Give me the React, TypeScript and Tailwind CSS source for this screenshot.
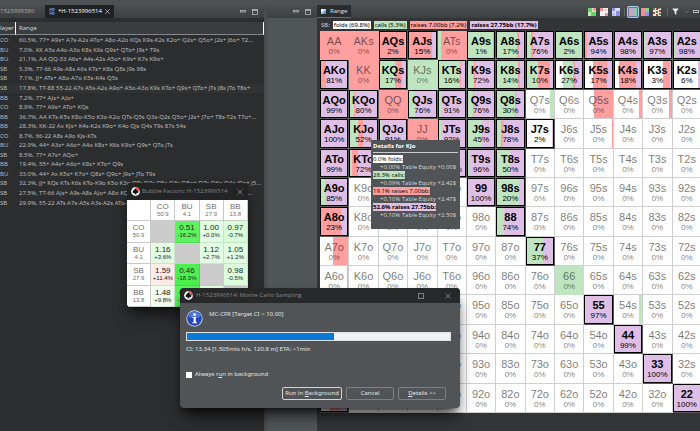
import React from "react";

const COLORS = {
  fold: "#ffffff",
  call: "#bfe5c0",
  raise: "#ff9fa0",
  shove: "#e0bfe6",
};

const RANKS = ["A", "K", "Q", "J", "T", "9", "8", "7", "6", "5", "4", "3", "2"];

// [fold, call, small raise, big raise] in percent, folded hands are left out
const MIX: Record<string, number[]> = {
  AA: [0, 0, 100, 0],
  AKs: [0, 0, 100, 0],
  AQs: [0, 0, 98, 2],
  AJs: [0, 0, 85, 15],
  ATs: [0, 12, 88, 0],
  A9s: [0, 96, 3, 1],
  A8s: [0, 75, 8, 17],
  A7s: [0, 14, 10, 76],
  A6s: [0, 98, 0, 2],
  A5s: [0, 0, 6, 94],
  A4s: [0, 2, 0, 98],
  A3s: [0, 3, 0, 97],
  A2s: [0, 2, 0, 98],
  AKo: [0, 0, 19, 81],
  KK: [0, 0, 100, 0],
  KQs: [0, 57, 26, 17],
  KJs: [0, 100, 0, 0],
  KTs: [0, 80, 4, 16],
  K9s: [0, 25, 3, 72],
  K8s: [0, 78, 8, 14],
  K7s: [0, 42, 48, 10],
  K6s: [27, 38, 8, 27],
  K5s: [30, 0, 53, 17],
  K4s: [17, 0, 65, 18],
  K3s: [70, 0, 27, 3],
  K2s: [94, 0, 0, 6],
  AQo: [0, 1, 0, 99],
  KQo: [0, 14, 6, 80],
  QQ: [0, 0, 100, 0],
  QJs: [0, 24, 0, 76],
  QTs: [0, 9, 0, 91],
  Q9s: [0, 20, 4, 76],
  Q8s: [0, 67, 3, 30],
  Q7s: [84, 16, 0, 0],
  Q5s: [33, 0, 67, 0],
  Q4s: [88, 0, 12, 0],
  Q3s: [90, 0, 10, 0],
  AJo: [0, 0, 0, 100],
  KJo: [0, 28, 19, 52],
  QJo: [0, 9, 0, 91],
  JJ: [0, 0, 100, 0],
  JTs: [0, 8, 0, 92],
  J9s: [0, 55, 0, 45],
  J8s: [0, 16, 6, 78],
  J7s: [98, 0, 0, 2],
  J5s: [97, 0, 3, 0],
  ATo: [0, 1, 0, 99],
  KTo: [0, 8, 20, 72],
  TT: [0, 0, 0, 100],
  T9s: [0, 4, 0, 96],
  T8s: [0, 50, 0, 50],
  A9o: [0, 15, 0, 85],
  "99": [0, 0, 0, 100],
  "98s": [0, 80, 0, 20],
  A8o: [0, 0, 77, 23],
  "88": [0, 26, 0, 74],
  A7o: [45, 0, 55, 0],
  "77": [0, 63, 0, 37],
  A6o: [96, 0, 4, 0],
  "66": [0, 100, 0, 0],
  "55": [0, 3, 0, 97],
  "54s": [90, 10, 0, 0],
  "44": [0, 1, 0, 99],
  "33": [0, 0, 0, 100],
  "22": [0, 0, 0, 100],
  A2o: [33, 0, 37, 30],
};

const HISTORY = [
  ["CO", "60.5%, 77+ A9s+ A7s-A2s ATo+ A8o-A2o KQs K9s-K2s K2o+ Q2s+ Q5o+ J2s+ J6o+ T2..."],
  ["BU", "7.0%, KK A5s A4o-A3o K8s K6s Q9s+ QTo+ J9s+ T9s"],
  ["BU", "21.1%, AA QQ-33 A6s+ A4s-A2s A5o+ K9s+ K7s K9o+"],
  ["SB", "5.3%, 77-66 A9s-A8s A6s KTs+ K8s Q8s J9s 98s"],
  ["SB", "7.1%, JJ+ ATs+ A8o-A7o K5s-K4s Q5s"],
  ["SB", "17.8%, TT-88 55-22 A7s A5s-A2s A9o+ A5o-A3o K9s KTo+ Q9s+ QTo+ JTs J8s JTo T8s+"],
  ["BB", "7.2%, 77+ AJs+ AJo+"],
  ["CO", "8.9%, 77+ A9s+ ATo+ KQs"],
  ["BB", "36.7%, AA KTs-K5s K8o-K5o K3o-K2o QTs-Q5s Q3s-Q2s Q5o+ J2s+ J7o+ T8s-T2s T7o+..."],
  ["BB", "28.3%, KK-22 Ax KJs+ K4s-K2s K9o+ K4o QJs Q4s T9s 87s 54s"],
  ["CO", "8.7%, 66-22 A8s A9o KJs-KTs"],
  ["BU", "22.9%, 44+ A3s+ A6o+ A4o K8s+ K6s K9o+ Q9s+ QTo JTs"],
  ["SB", "8.5%, 77+ A7s+ AQo+"],
  ["BB", "19.4%, 55+ A4s+ A6o+ K8s+ KTo+ Q9s"],
  ["BU", "33.0%, 44+ Ax K5s+ K7o+ Q8s+ Q9o+ J9s+ JTo T9s"],
  ["SB", "32.3%, JJ+ KQs KTs K6s KTo-K9o K5o K3o QTs Q7s Q5s Q3s Q8o+ Q7s Q6o Q4o J9o+ J5..."],
  ["SB", "27.5%, TT-66 AJs+ A9s-A8s AJo+ A8o KQs K9s-K7s KTo+ Q9s Q7s QTo+ J8s+ T8s T2o..."],
  ["SB", "29.9%, 55-22 ATs A7s-A5s A3s-A2s ATo-A7o KJs K9s-K6s K9o+ QJs Q9s-Q8s J9s+ Q..."],
];

const SEATS = [
  ["CO", "50.9"],
  ["BU", "4.1"],
  ["SB", "27.9"],
  ["BB", "13.8"],
];

const FACTORS: (string[] | null)[][] = [
  [null, ["0.51", "-16.2%", "bg-[#5df35f]"], ["1.00", "+0.0%", "bg-[#e2ffe2]"], ["0.97", "-0.7%", "bg-[#d8ffd8]"]],
  [["1.16", "+3.6%", "bg-[#e2ffe2]"], null, ["1.12", "+2.7%", "bg-[#e2ffe2]"], ["1.05", "+1.2%", "bg-[#e2ffe2]"]],
  [["1.59", "+11.4%", "bg-[#ffeaea]"], ["0.46", "-18.3%", "bg-[#4cf04e]"], null, ["0.98", "-0.5%", "bg-[#dcffdc]"]],
  [["1.48", "+9.8%", "bg-[#f1fff1]"], ["0.49", "-17.1%", "bg-[#5df35f]"], ["1.02", "+0.5%", "bg-[#e2ffe2]"], null],
];

const fill = (mix: number[]) => {
  const keys = ["fold", "call", "raise", "shove"] as const;
  let at = 0;
  const stops = keys
    .map((key, i) => {
      const from = at;
      at += mix[i];
      return mix[i] > 0 ? `${COLORS[key]} ${from}% ${at}%` : "";
    })
    .filter(Boolean);
  return `linear-gradient(to right, ${stops.join(", ")})`;
};

const handName = (row: number, col: number) => {
  if (row === col) return RANKS[row] + RANKS[row];
  return row < col ? `${RANKS[row]}${RANKS[col]}s` : `${RANKS[col]}${RANKS[row]}o`;
};

const HandCell = ({ name }: { name: string }) => {
  const mix = MIX[name] || [100, 0, 0, 0];
  const active = mix[3] > 0;
  const edge = active ? "bg-[#5a5a5a]" : mix[0] > 0 ? "bg-[#cfcfcf]" : "";
  return (
    <td
      className={`h-[29px] p-0 pr-px pb-px ${edge}`}
      style={edge ? undefined : { background: fill(mix) }}
    >
      <div
        className={`flex h-full flex-col items-center whitespace-nowrap ${
          active ? "border border-black pt-[3px] text-black" : "pt-1 text-black/55"
        }`}
        style={{ background: fill(mix) }}
      >
        <span className={`text-[11px] leading-3 ${active ? "font-bold" : ""}`}>{name}</span>
        <span className="text-[8px] leading-[10px]">{mix[3]}%</span>
      </div>
    </td>
  );
};

const PaneButtons = () => (
  <div className="ml-auto flex items-center gap-1.5 pr-1.5 text-[#b4b8ba]">
    <button aria-label="Minimize">
      <svg className="h-1.5 w-1.5" viewBox="0 0 6 6" fill="none" stroke="currentColor">
        <rect x="0.5" y="1.5" width="5" height="1.5" strokeWidth="0.8" />
      </svg>
    </button>
    <button aria-label="Maximize">
      <svg className="h-1.5 w-1.5" viewBox="0 0 6 6" fill="none" stroke="currentColor">
        <rect x="0.5" y="0.5" width="5" height="5" strokeWidth="0.8" />
        <path d="M0.5 1.3h5" />
      </svg>
    </button>
  </div>
);

const tabBar = "flex h-[13px] items-center bg-linear-to-b from-[#4b4f51] to-[#3c3f41] font-['Open_Sans',sans-serif]";

const HistoryPane = () => (
  <section className="flex min-w-0 flex-col overflow-hidden bg-[#2c2d2e]">
    <div className={tabBar}>
      <button className="w-[45px] text-left text-[#aeb1b3]">1523995380</button>
      <button className="flex h-full items-center gap-[3px] bg-[#1f2123] px-1 text-white">
        <svg className="h-[7px] w-[6px]" viewBox="0 0 6 7" fill="none" stroke="#6f93d6">
          <path d="M1 0v6.5M1 1.5h2M1 5.5h2" strokeWidth="0.8" />
          <rect x="3" y="0.5" width="2" height="2" strokeWidth="0.8" />
          <rect x="3" y="4.2" width="2" height="2" strokeWidth="0.8" />
        </svg>
        *H-1523996514
        <svg className="h-[5px] w-[5px]" viewBox="0 0 5 5" stroke="#c9cccd" strokeWidth="0.8">
          <path d="M0.3 0.3l4.4 4.4M4.7 0.3L0.3 4.7" />
        </svg>
      </button>
      <PaneButtons />
    </div>
    <table className="mt-1 w-full table-fixed border-separate border-spacing-0 text-left">
      <thead>
        <tr className="h-[13px] bg-[#3a3d3f] text-[#d0d2d3]">
          <th className="w-4 border-r border-b border-r-white border-b-[#85888a] p-0 font-normal">layer</th>
          <th className="border-r border-b border-r-white border-b-[#85888a] p-0 pl-[3px] font-normal">Range</th>
        </tr>
      </thead>
    </table>
    <table className="mt-px h-[172px] w-full table-fixed border-separate border-spacing-0 text-[#b8bbbd]">
      <tbody>
        {HISTORY.map(([player, range], i) => (
          <tr key={i} className={i === 5 ? "bg-[#313233]" : ""}>
            <td className="w-4 p-0">{player}</td>
            <td className="overflow-hidden p-0 pl-[3px] whitespace-nowrap">{range}</td>
          </tr>
        ))}
      </tbody>
    </table>
  </section>
);

const ToolIcon = ({ label, active, children }: { label: string; active?: boolean; children: React.ReactNode }) => (
  <button
    aria-label={label}
    className={`flex h-3 w-3 items-center justify-center rounded-xs ${
      active ? "border border-[#a9d0f2] bg-[#5b7c9b]" : ""
    }`}
  >
    <svg className="h-2 w-2" viewBox="0 0 8 8">
      {children}
    </svg>
  </button>
);

const RangeToolbar = () => (
  <div className="ml-auto flex items-center">
    <ToolIcon label="Show calls">
      <rect width="8" height="8" fill="#f3dccb" />
      <path d="M0 0h4v4H0zM3 4h5v4H3z" fill="#62d66a" />
      <path d="M0 4h3v4H0z" fill="#bdeeb5" />
      <path d="M5 0h3v3H5z" fill="#f0a39b" />
    </ToolIcon>
    <ToolIcon label="Show raises">
      <rect width="8" height="8" fill="#fdf1ef" />
      <path d="M0 0h3v3H0zM5 5h3v3H5z" fill="#f0938f" />
      <path d="M4 1h3v2H4z" fill="#f7c9c6" />
    </ToolIcon>
    <ToolIcon label="Show equity">
      <rect width="8" height="8" fill="#d9dcfa" />
      <path d="M0 0h3v3H0zM4 3h4v5H4z" fill="#8b92e8" />
      <path d="M0 5h3v3H0z" fill="#b9bdf4" />
    </ToolIcon>
    <span className="mx-0.5 h-2 w-px bg-[#5f6365]" />
    <ToolIcon label="Strategy bars" active>
      <rect width="3" height="8" fill="#ec9a9c" />
      <rect x="3" width="2" height="8" fill="#b7a9dc" />
      <rect x="5" width="3" height="8" fill="#8fc7a8" />
    </ToolIcon>
    <ToolIcon label="Strategy blocks">
      <rect width="8" height="8" fill="#f08f93" />
      <path d="M4 0h4v4H4z" fill="#7fd68b" />
      <path d="M4 4h4v4H4z" fill="#8f96e6" />
    </ToolIcon>
    <ToolIcon label="Suits">
      <rect width="8" height="8" fill="#e9e2dc" />
      <path d="M0 0h2v2H0zM3 3h2v2H3zM6 5h2v2H6zM5 0h2v1H5z" fill="#4a8f50" />
      <path d="M3 0h2v2H3zM0 4h2v2H0zM6 2h2v2H6zM3 6h2v2H3z" fill="#a9484a" />
    </ToolIcon>
    <span className="mx-1 h-2 w-px bg-[#5f6365]" />
    <button aria-label="Filter">
      <svg className="h-[7px] w-[7px]" viewBox="0 0 7 7" fill="#eceeef">
        <path d="M0.2 0.5h6.6L4.3 3.7V7L2.7 5.8V3.7z" />
      </svg>
    </button>
    <button aria-label="View menu" className="ml-1.5">
      <svg className="h-1 w-1" viewBox="0 0 4 4" fill="none" stroke="#7b7f81" strokeWidth="0.8">
        <path d="M0.5 1.2L2 2.7 3.5 1.2" />
      </svg>
    </button>
    <button aria-label="Minimize" className="mr-px ml-1 h-[3px] w-1.5 border border-[#b4b8ba]" />
  </div>
);

const RangePane = () => (
  <section className="flex min-w-0 flex-col overflow-hidden bg-[#323435]">
    <div className={tabBar}>
      <button className="flex h-full items-center gap-1 border-b border-[#3b78b0] bg-[#2a2d30] px-1 text-[#dfe1e2]">
        <svg className="h-[5px] w-[5px]" viewBox="0 0 5 5">
          <rect width="5" height="5" fill="#a9c7e0" />
          <rect width="2.5" height="2.5" fill="#ffffff" />
          <rect x="2.5" y="2.5" width="2.5" height="2.5" fill="#5d93c4" />
        </svg>
        Range
      </button>
      <RangeToolbar />
    </div>
    <div className="mt-[3px] ml-1 flex h-2 items-center gap-[3px] leading-2 whitespace-nowrap text-black">
      <span className="text-[#d0d2d3]">SB:</span>
      <span className="bg-white px-px">folds (69.8%)</span>
      <span className="bg-[#bfe5c0] px-px">calls (5.3%)</span>
      <span className="bg-[#ff9fa0] px-px">raises 7.00bb (7.2%)</span>
      <span className="bg-[#e0bfe6] px-px font-bold">raises 27.75bb (17.7%)</span>
    </div>
    <div className="mt-0.5 ml-[3px]">
      <table className="h-[382px] w-[calc(100%+2px)] table-fixed border-separate border-spacing-0 font-['Liberation_Sans',sans-serif]">
        <tbody>
          {RANKS.map((rank, row) => (
            <tr key={rank}>
              {RANKS.map((_, col) => (
                <HandCell key={col} name={handName(row, col)} />
              ))}
            </tr>
          ))}
        </tbody>
      </table>
    </div>
  </section>
);

const AppIcon = () => (
  <svg className="h-[9px] w-[9px] shrink-0" viewBox="0 0 9 9">
    <circle cx="4.5" cy="4.5" r="4.4" fill="#f4f4f4" />
    <path d="M4.5 0.1A4.4 4.4 0 0 1 8.9 4.5H7.2A2.7 2.7 0 0 0 4.5 1.8z" fill="#e5484d" />
    <path d="M4.5 1.2c.7 1.1 2.8 2.1 2.8 3.7 0 1.2-1.5 1.5-2.2.9l.6 1.4H3.3l.6-1.4c-.7.6-2.2.3-2.2-.9 0-1.6 2.1-2.6 2.8-3.7z" fill="#111" />
  </svg>
);

const CloseIcon = () => (
  <svg className="h-1.5 w-1.5" viewBox="0 0 6 6" stroke="#8d8f90" strokeWidth="0.8">
    <path d="M0.5 0.5l5 5M5.5 0.5l-5 5" />
  </svg>
);

const Tooltip = () => (
  <div
    role="tooltip"
    className="absolute top-[140px] left-[371px] w-[89px] bg-[#505457] px-0.5 pt-0.5 pb-2.5 font-['Open_Sans',sans-serif] leading-2 whitespace-nowrap text-[#e3e4e5]"
  >
    <p className="border-b border-[#c9cbcc] pb-0.5 font-bold text-white">Details for KJo</p>
    <div className="mt-0.5 text-black">
      <p><span className="bg-white">0.0% folds:</span></p>
      <p className="pl-[7px] text-[#d6d8d9]">+0.00% Table Equity +0.00$</p>
      <p><span className="bg-[#bfe5c0]">28.3% calls:</span></p>
      <p className="pl-[7px] text-[#d6d8d9]">+0.09% Table Equity +2.42$</p>
      <p><span className="bg-[#ff9fa0]">19.1% raises 7.00bb:</span></p>
      <p className="pl-[7px] text-[#d6d8d9]">+0.10% Table Equity +2.47$</p>
      <p><span className="bg-[#e0bfe6] font-bold">52.6% raises 27.75bb:</span></p>
      <p className="pl-[7px] text-[#d6d8d9]">+0.10% Table Equity +2.50$</p>
    </div>
  </div>
);

const SeatHeader = ({ seat, scope }: { seat: string[]; scope: "row" | "col" }) => (
  <th scope={scope} className="border-r border-b border-[#c9c9c9] bg-white p-0 font-normal text-[#707070]">
    <div className="text-[8px] leading-[9px]">{seat[0]}</div>
    <div className="text-[6px] leading-[7px]">{seat[1]}</div>
  </th>
);

const BubbleWindow = () => (
  <div className="absolute top-[183px] left-[127px] w-[121px] overflow-hidden rounded-sm shadow-lg shadow-black/60">
    <div className="flex h-[17px] items-center gap-0.5 bg-[#222425] pr-[5px] pl-1 font-['Open_Sans',sans-serif] text-[#85888a]">
      <AppIcon />
      <span className="whitespace-nowrap">Bubble Factors: H-1523996514</span>
      <button aria-label="Close" className="ml-auto">
        <CloseIcon />
      </button>
    </div>
    <table className="h-[107px] w-full table-fixed border-separate border-spacing-0 bg-white text-center font-['Liberation_Sans',sans-serif]">
      <thead>
        <tr className="h-[21px]">
          <td className="border-r border-b border-[#c9c9c9] p-0" />
          {SEATS.map((seat) => (
            <SeatHeader key={seat[0]} seat={seat} scope="col" />
          ))}
        </tr>
      </thead>
      <tbody>
        {FACTORS.map((line, i) => (
          <tr key={i}>
            <SeatHeader seat={SEATS[i]} scope="row" />
            {line.map((cell, j) =>
              cell ? (
                <td key={j} className={`border-r border-b border-black/10 p-0 text-[#222] ${cell[2]}`}>
                  <div className="text-[8px] leading-[9px]">{cell[0]}</div>
                  <div className="text-[6px] leading-[7px]">{cell[1]}</div>
                </td>
              ) : (
                <td key={j} className="bg-[#cccccc] p-0" />
              )
            )}
          </tr>
        ))}
      </tbody>
    </table>
  </div>
);

const dialogButton = "h-[13px] rounded-xs border text-center whitespace-nowrap";

const SamplingDialog = () => (
  <div
    role="dialog"
    aria-labelledby="sampling-title"
    className="absolute top-[288px] left-[180px] w-[280px] overflow-hidden rounded-sm bg-[#505457] text-[#e3e4e5] shadow-lg shadow-black/70"
  >
    <div className="flex h-[15px] items-center gap-[3px] bg-[#262829] pr-[9px] pl-1 font-['Open_Sans',sans-serif] text-[#85888a]">
      <AppIcon />
      <span id="sampling-title">H-1523996514: Monte Carlo Sampling</span>
      <button aria-label="Maximize" className="mr-[18px] ml-auto h-1.5 w-1.5 border border-[#7e8182]" />
      <button aria-label="Close">
        <CloseIcon />
      </button>
    </div>
    <div className="px-1.5 pt-[7px] pb-2">
      <div className="flex gap-1.5">
        <svg className="h-[17px] w-[17px]" viewBox="0 0 17 17">
          <circle cx="8.5" cy="8.5" r="8.2" fill="#c9d3ea" />
          <circle cx="8.5" cy="8.5" r="7.3" fill="#2148b8" />
          <path d="M2 6.5a6.8 6.8 0 0 1 13 0c-4 2-9 2-13 0z" fill="#4f78d8" />
          <circle cx="8.6" cy="4.6" r="1.4" fill="#fff" />
          <path d="M6.6 7h3.2v5.2h1.2v1.1H6.4v-1.1h1.2V8.1h-1z" fill="#fff" />
        </svg>
        <p>MC-CFR [Target CI &lt; 10.00]</p>
      </div>
      <div
        role="progressbar"
        aria-label="Sampling progress"
        aria-valuenow={56}
        className="mt-[5px] mr-[3px] h-[9px] border border-[#dfe1e2] bg-[#f0f1f2]"
      >
        <div className="h-full bg-[#0a78d7]" style={{ width: "56%" }} />
      </div>
      <p className="mt-1">CI: 13.34 [1.505mio h/s, 120.8 m] ETA: &lt;1min</p>
      <label className="mt-4 flex items-center gap-[3px]">
        <input type="checkbox" className="h-1.5 w-1.5 appearance-none bg-white" />
        <span>
          Always r<u>u</u>n in background
        </span>
      </label>
      <div className="mt-2 mr-2 flex justify-end gap-1">
        <button className={`${dialogButton} w-[60px] border-[#d3d5d6]`}>
          Run in <u>B</u>ackground
        </button>
        <button className={`${dialogButton} w-12 border-[#7d8183]`}>Cancel</button>
        <button className={`${dialogButton} w-12 border-[#7d8183]`}>
          <u>D</u>etails &gt;&gt;
        </button>
      </div>
    </div>
  </div>
);

const App = () => (
  <main className="relative flex min-h-screen flex-col overflow-hidden bg-[#4d5153] font-['Noto_Sans',sans-serif] text-[6px] leading-[9px]">
    <div className="grid flex-1 grid-cols-[264fr_3fr_50fr_383fr] pt-[5px]">
      <HistoryPane />
      <div className="bg-[#484c4e]" />
      <section className="min-w-0 bg-[#505558]">
        <div className={tabBar}>
          <PaneButtons />
        </div>
      </section>
      <RangePane />
    </div>
    <Tooltip />
    <BubbleWindow />
    <SamplingDialog />
  </main>
);

export default App;
